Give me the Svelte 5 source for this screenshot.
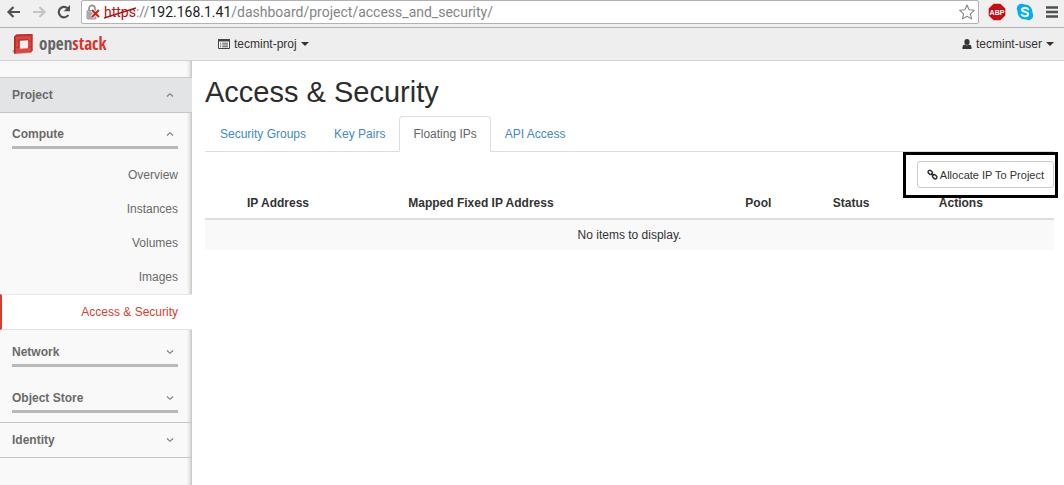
<script>
  const tabs = ['Security Groups', 'Key Pairs', 'Floating IPs', 'API Access'];
  const pages = ['Overview', 'Instances', 'Volumes', 'Images', 'Access & Security'];
  let activeTab = $state('Floating IPs');
  let activePage = $state('Access & Security');
</script>

{#snippet chevron(up)}
  <svg class="chevron" viewBox="0 0 8 8" width="8" height="8" aria-hidden="true">
    <path d={up ? 'M1 5.5 4 2.7 7 5.5' : 'M1 2.5 4 5.3 7 2.5'} fill="none" stroke="#7b7b7b" stroke-width="1.1" />
  </svg>
{/snippet}

<div class="page">
  <div class="browser">
    <button class="nav" aria-label="Back">
      <svg viewBox="0 0 16 16" width="16" height="16"><path d="M14 8H3M7.5 3 2.5 8l5 5" fill="none" stroke="#505050" stroke-width="2.2" /></svg>
    </button>
    <button class="nav" aria-label="Forward">
      <svg viewBox="0 0 16 16" width="16" height="16"><path d="M2 8h11M8.500 3l5 5-5 5" fill="none" stroke="#c4c4c4" stroke-width="2.200" /></svg>
    </button>
    <button class="nav" aria-label="Reload">
      <svg viewBox="0 0 16 16" width="16" height="16"><path d="M12.300 11A5.200 5.200 0 1 1 11.500 4.300" fill="none" stroke="#505050" stroke-width="2.200" /><path d="M14 1v6.300H7.700z" fill="#505050" /></svg>
    </button>
    <div class="address">
      <svg class="lock" viewBox="0 0 14 16" width="14" height="16" aria-hidden="true">
        <path d="M3 8V4.500a3 3 0 0 1 6 0V8" fill="none" stroke="#999" stroke-width="1.800" />
        <rect x="1" y="6.500" width="9" height="8.500" rx="1" fill="#bbb" stroke="#999" />
        <path d="M2 9h7M2 11h7M2 13h7" stroke="#8e8e8e" stroke-width=".7" />
        <path d="m6 6 7 7m0-7-7 7" stroke="#fff" stroke-width="3.500" />
        <path d="m6 6 7 7m0-7-7 7" stroke="#d91c16" stroke-width="2" />
      </svg>
      <span class="url"><span class="scheme">https<svg viewBox="0 0 32 12" preserveAspectRatio="none" aria-hidden="true"><path d="M0 11 32 1" stroke="#b51111" stroke-width="1.600" /></svg></span>://<b>192.168.1.41</b>/dashboard/project/access_and_security/</span>
      <button class="star" aria-label="Bookmark">
        <svg viewBox="0 0 16 16" width="16" height="16"><path d="m8 1 2.100 4.800 5.200.5-3.900 3.500 1.100 5.100L8 12.200l-4.500 2.700 1.100-5.100L.7 6.300l5.200-.5z" fill="#fff" stroke="#868686" stroke-width="1.100" stroke-linejoin="round" /></svg>
      </button>
    </div>
    <div class="extensions">
      <button aria-label="Adblock Plus">
        <svg viewBox="0 0 18 18" width="18" height="18"><path d="M5.600.7h6.800l4.900 4.900v6.800l-4.900 4.900H5.600L.7 12.400V5.600z" fill="#c90d12" /><text x="9" y="12" text-anchor="middle" font-family="Liberation Sans, sans-serif" font-size="7" font-weight="700" fill="#fff">ABP</text></svg>
      </button>
      <button aria-label="Skype">
        <svg viewBox="0 0 18 18" width="18" height="18"><circle cx="9" cy="9" r="7.500" fill="#00aff0" /><circle cx="5.500" cy="5.500" r="4.700" fill="#00aff0" /><circle cx="12.500" cy="12.500" r="4.700" fill="#00aff0" /><path d="M12.200 6.300C11.500 4.800 6.200 4 6 6.700c-.1 2.600 6.200 1.500 6.100 4.500-.1 2.800-5.500 2.500-6.400.5" fill="none" stroke="#fff" stroke-width="2" stroke-linecap="round" /></svg>
      </button>
      <button class="menu" aria-label="Menu">
        <svg viewBox="0 0 12 14" width="12" height="14"><path d="M0 2.500h12M0 7h12M0 11.500h12" stroke="#505050" stroke-width="2.400" /></svg>
      </button>
    </div>
  </div>

  <header>
    <a class="brand" href="#home">
      <svg viewBox="0 0 22 22" width="22" height="22" aria-hidden="true">
        <path d="M0 18 3 16v4l16-.8v.8L3 21z" fill="#b5a5a3" />
        <path d="M2 3.500 4.500 1.500 20.500 1v16.500L19 19.500 2 20.500z" fill="#df453c" />
        <path d="m2 3.500 2.500-2 16-.5-1.500 2z" fill="#b5332c" />
        <path d="m19 3 1.500-2v16.500L19 19.500z" fill="#bd342d" />
        <path d="M2 3.500h1.500v16.900L2 20.500z" fill="#a82b26" />
        <path d="M7 7 16 6.500v8.700l-9 .6z" fill="#f2f0f0" />
        <path d="M6.500 6.500 16 6v1.200l-8.200.5v8.100l-1.300.1z" fill="#a82b26" />
        <path d="M3 8h3.500M3 14.500h3.500M16 8h3.500M16 14h3.500" stroke="#bd342d" stroke-width=".8" />
      </svg>
      <span class="word">open<b>stack</b></span>
    </a>
    <button class="picker">
      <svg viewBox="0 0 12 10" width="12" height="10" aria-hidden="true"><path d="M.5.5h11v9H.5z" fill="#fff" stroke="#444" /><path d="M0 0h12v2.500H0z" fill="#444" /><path d="M2 4.200h1.200M4.200 4.200H10M2 6h1.200M4.200 6H10M2 7.800h1.200M4.200 7.800H10" stroke="#555" /></svg>
      tecmint-proj <span class="caret"></span>
    </button>
    <button class="picker user">
      <svg viewBox="0 0 10 10" width="10" height="10" aria-hidden="true"><ellipse cx="5" cy="3" rx="2.600" ry="3" fill="#333" /><path d="M.5 10V8q0-2.300 2.600-2.600Q5 7.200 6.900 5.400 9.500 5.700 9.500 8v2z" fill="#333" /></svg>
      tecmint-user <span class="caret"></span>
    </button>
  </header>

  <div class="body">
    <nav class="sidebar" aria-label="Main">
      <button class="group project">Project {@render chevron(true)}</button>
      <button class="section"><span>Compute {@render chevron(true)}</span></button>
      <div class="links">
        {#each pages as page}
          <a href="#page" class:active={activePage === page} onclick={() => (activePage = page)}>{page}</a>
        {/each}
      </div>
      <button class="section"><span>Network {@render chevron(false)}</span></button>
      <button class="section store"><span>Object Store {@render chevron(false)}</span></button>
      <button class="group">Identity {@render chevron(false)}</button>
    </nav>

    <main>
      <h1>Access &amp; Security</h1>
      <div class="tabs" role="tablist">
        {#each tabs as tab}
          <button role="tab" aria-selected={activeTab === tab} onclick={() => (activeTab = tab)}>{tab}</button>
        {/each}
      </div>
      <div class="actions">
        <div class="callout">
          <button class="allocate">
            <svg viewBox="0 0 11 11" width="11" height="11" aria-hidden="true"><g fill="none" stroke="#333" stroke-width="1.500"><rect x="-2.400" y="-1.700" width="4.800" height="3.400" rx="1.700" transform="translate(3.300 3.400) rotate(45)" /><rect x="-2.400" y="-1.700" width="4.800" height="3.400" rx="1.700" transform="translate(7.700 7.700) rotate(45)" /><path d="m4.300 4.300 2.500 2.500" /></g></svg>
            Allocate IP To Project
          </button>
        </div>
      </div>
      <table>
        <colgroup>
          <col class="c-check" /><col class="c-ip" /><col class="c-fixed" /><col class="c-pool" /><col class="c-status" /><col />
        </colgroup>
        <thead>
          <tr>
            <td></td><th>IP Address</th><th>Mapped Fixed IP Address</th><th>Pool</th><th>Status</th><th>Actions</th>
          </tr>
        </thead>
        <tbody>
          <tr><td colspan="6">No items to display.</td></tr>
        </tbody>
      </table>
    </main>
  </div>
</div>

<style>
  :global(body) { margin: 0; background: #fff; }
  .page {
    min-height: 100vh;
    display: flex;
    flex-direction: column;
    font: 12px/16px "Liberation Sans", Arial, sans-serif;
    color: #333;
  }
  .page * { box-sizing: border-box; }
  button { font: inherit; color: inherit; background: none; border: 0; padding: 0; margin: 0; cursor: pointer; }
  a { text-decoration: none; }
  svg { display: block; flex: none; }

  .browser {
    display: flex;
    align-items: center;
    gap: 9px;
    height: 28px;
    padding: 0 6px 3px;
    background: #f0f0f0;
    border-bottom: 1px solid #b0b0b0;
  }
  .address {
    flex: 1;
    min-width: 0;
    height: 24px;
    display: flex;
    align-items: center;
    gap: 4px;
    padding: 0 3px 0 4px;
    background: #fff;
    border: 1px solid #b2b2b2;
    border-radius: 2px;
  }
  .extensions { display: flex; align-items: center; gap: 10px; }
  .menu { padding-left: 2px; }
  .url {
    flex: 1;
    min-width: 0;
    overflow: hidden;
    white-space: nowrap;
    font: 14px/22px Roboto, "Open Sans", sans-serif;
    color: #858585;
  }
  .url b { font-weight: 400; color: #222; }
  .scheme { position: relative; display: inline-block; color: #b51111; }
  .scheme svg { position: absolute; left: 0; top: 6px; width: 100%; height: 12px; }

  header {
    display: flex;
    align-items: center;
    height: 33px;
    padding: 0 10px 0 12px;
    background: #eee;
    border-bottom: 1px solid #d3d3d3;
  }
  .brand { display: flex; align-items: center; gap: 5px; width: 206px; color: #666; }
  .word { font: 300 17px/22px "Open Sans Condensed", "Liberation Sans Narrow", "Arial Narrow", sans-serif; }
  .word b { color: #d8352b; }
  .picker { display: flex; align-items: center; gap: 4px; }
  .user { margin-left: auto; }
  .caret { border: 4px solid transparent; border-top-color: #333; border-bottom: 0; }

  .body { flex: 1; display: flex; }
  .sidebar {
    flex: none;
    width: 192px;
    padding-top: 16px;
    background: #f9f9f9;
    box-shadow: inset -4px 0 4px -3px #aaa;
    color: #6a6a6a;
  }
  .sidebar button { display: flex; width: 100%; font-weight: 700; text-align: left; }
  .group {
    align-items: center;
    justify-content: space-between;
    height: 35px;
    padding: 0 18px 0 12px;
    border-bottom: 1px solid #c6c6c6;
  }
  .group.project { height: 36px; background: #e3e4e6; border-top: 1px solid #c6c8ca; }
  .section { padding: 13px 14px 0 12px; }
  .section span {
    flex: 1;
    display: flex;
    align-items: center;
    justify-content: space-between;
    padding: 0 4px 4px 0;
    border-bottom: 3px solid #b9b9b9;
  }
  .section.store { padding-top: 23px; padding-bottom: 9px; border-bottom: 1px solid #c6c6c6; }
  .links { padding: 9px 0 1px; }
  .links a {
    display: block;
    height: 34px;
    line-height: 34px;
    padding-right: 14px;
    text-align: right;
    color: #6a6a6a;
  }
  .links a.active {
    height: 36px;
    background: #fff;
    border-left: 2px solid #dc3b2b;
    border-top: 1px solid #e8e8e8;
    border-bottom: 1px solid #e2e2e2;
    color: #d8402f;
  }

  main { flex: 1; min-width: 0; padding: 13px 10px 0 13px; }
  h1 { margin: 0; font-size: 29px; font-weight: 400; line-height: 36px; color: #2d2d2d; }
  .tabs { display: flex; margin-top: 6px; padding-left: 1px; border-bottom: 1px solid #ddd; }
  .tabs button {
    height: 36px;
    margin-bottom: -1px;
    padding: 0 13px;
    border: 1px solid transparent;
    border-radius: 4px 4px 0 0;
    color: #428bca;
  }
  .tabs button[aria-selected='true'] { background: #fff; border-color: #ddd #ddd #fff; color: #666; }
  .actions { display: flex; justify-content: flex-end; padding-top: 9px; }
  .callout { position: relative; }
  .callout::after {
    content: '';
    position: absolute;
    inset: -9px -4px -10px -14px;
    border: 3px solid #000;
    pointer-events: none;
  }
  .allocate {
    display: flex;
    align-items: center;
    gap: 2px;
    height: 27px;
    padding: 0 9px;
    background: #fff;
    border: 1px solid #ccc;
    border-radius: 3px;
    font-size: 11px;
  }
  table { width: 100%; table-layout: fixed; border-collapse: collapse; }
  .c-check { width: 4%; }
  .c-ip { width: 19%; }
  .c-fixed { width: 39.7%; }
  .c-pool { width: 10.3%; }
  .c-status { width: 12.5%; }
  th { height: 31px; padding: 0 8px; text-align: left; white-space: nowrap; }
  thead { border-bottom: 2px solid #ddd; }
  tbody td { height: 31px; padding: 0; background: #f9f9f9; text-align: center; }
</style>
